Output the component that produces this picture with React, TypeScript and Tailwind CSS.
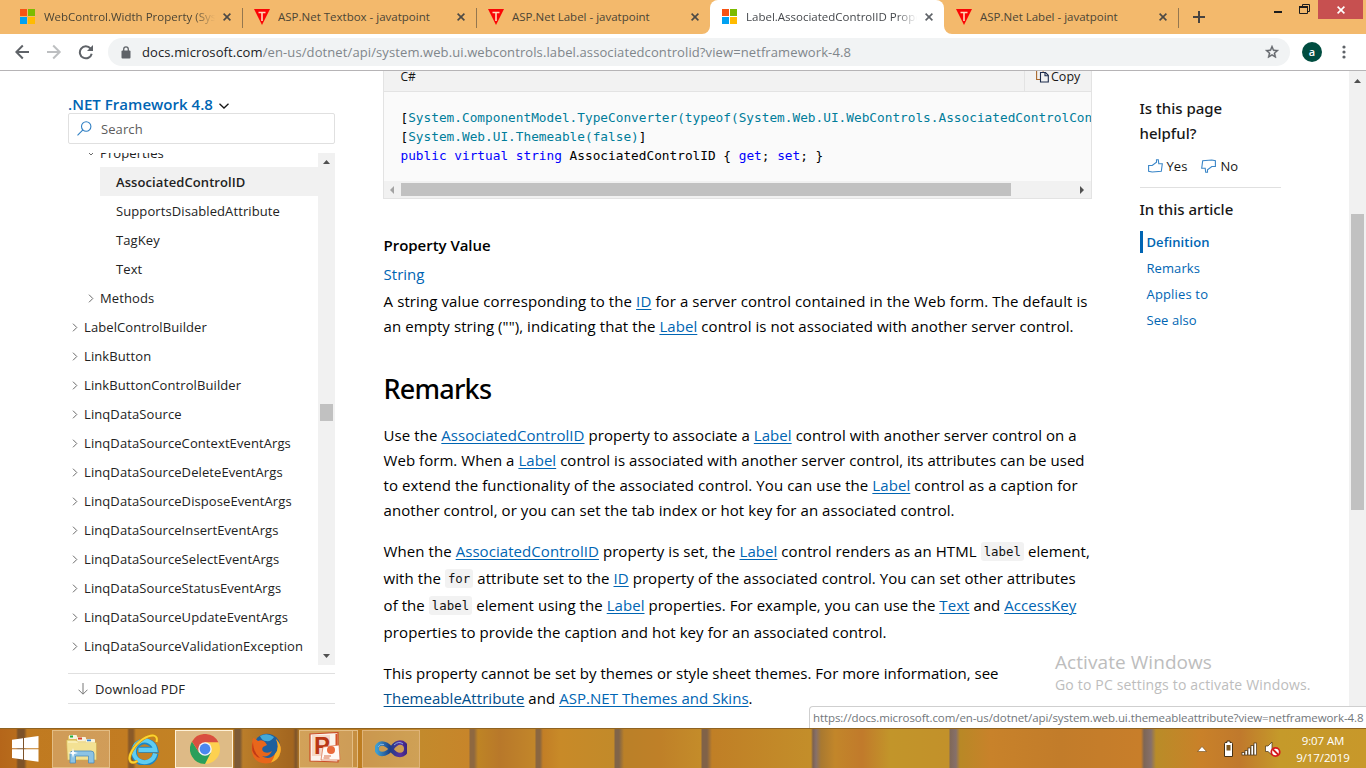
import type { ReactNode } from "react";

function MsLogo() {
  return (
    <svg width="16" height="16" viewBox="0 0 16 16" className="shrink-0" shapeRendering="crispEdges">
      <rect x="0" y="0" width="7" height="7" fill="#f65314" />
      <rect x="8" y="0" width="7" height="7" fill="#7cbb00" />
      <rect x="0" y="8" width="7" height="7" fill="#00a1f1" />
      <rect x="8" y="8" width="7" height="7" fill="#ffbb00" />
    </svg>
  );
}

function JtpLogo() {
  return (
    <svg width="16" height="16" viewBox="0 0 16 16" className="shrink-0">
      <path d="M0 0H16L8 16Z" fill="#fb0505" />
      <path d="M4.5 3.5h7M8 3.5v8.5" stroke="#ffd9b8" strokeWidth="1.6" fill="none" />
    </svg>
  );
}

function CloseX({ color = "#4d4a45" }: { color?: string }) {
  return (
    <svg width="8" height="8" viewBox="0 0 8 8" className="shrink-0">
      <path d="M0.6 0.6L7.4 7.4M7.4 0.6L0.6 7.4" stroke={color} strokeWidth="1.6" />
    </svg>
  );
}

function Tab({ icon, title, fade = "", sep = true }: { icon: ReactNode; title: string; fade?: string; sep?: boolean }) {
  return (
    <div className="flex h-[34px] w-[234px] shrink-0 items-center pl-[12px]">
      {icon}
      <span className={`ml-2 w-[171px] shrink-0 overflow-hidden whitespace-nowrap text-[11.5px] leading-4 text-[#4c4535] ${fade}`}>
        {title}
      </span>
      <span className="ml-2 flex"><CloseX /></span>
      {sep && <span className="ml-[11px] mt-0.5 h-5 w-px shrink-0 bg-[#94774f]" />}
    </div>
  );
}

function TabStrip() {
  return (
    <div className="relative flex h-[34px] shrink-0 bg-[#f3b96c] pl-2">
      <Tab
        icon={<MsLogo />}
        title="WebControl.Width Property (System"
        fade="[mask-image:linear-gradient(to_right,black_150px,transparent_171px)]"
      />
      <Tab icon={<JtpLogo />} title="ASP.Net Textbox - javatpoint" />
      <Tab icon={<JtpLogo />} title="ASP.Net Label - javatpoint" sep={false} />
      <div className="relative flex h-[34px] w-[234px] shrink-0 items-center rounded-t-lg bg-white pl-[12px]">
        <svg width="8" height="8" className="absolute -left-2 bottom-0"><path d="M8 0A8 8 0 0 1 0 8H8Z" fill="#fff" /></svg>
        <svg width="8" height="8" className="absolute -right-2 bottom-0"><path d="M0 0A8 8 0 0 0 8 8H0Z" fill="#fff" /></svg>
        <MsLogo />
        <span className="ml-2 w-[171px] shrink-0 overflow-hidden whitespace-nowrap text-[11.5px] leading-4 text-[#45484c] [mask-image:linear-gradient(to_right,black_150px,transparent_171px)]">
          Label.AssociatedControlID Property
        </span>
        <span className="ml-2 flex"><CloseX color="#5f6368" /></span>
      </div>
      <Tab icon={<JtpLogo />} title="ASP.Net Label - javatpoint" />
      <svg width="12" height="12" viewBox="0 0 12 12" className="ml-[15px] mt-[11px]">
        <path d="M6 0V12M0 6H12" stroke="#474340" strokeWidth="2" />
      </svg>
      <div className="ml-auto flex pr-[3px]">
        <svg width="44" height="20" viewBox="0 0 44 20">
          <rect x="0" y="11" width="8" height="2" fill="#1c1c1c" />
          <path d="M28.500 6V4.500H35.500V11.500H34" fill="none" stroke="#1c1c1c" />
          <path d="M25.500 6V13.500H33.500V6" fill="none" stroke="#1c1c1c" />
          <rect x="25" y="6" width="9" height="2" fill="#1c1c1c" />
        </svg>
        <div className="flex h-[19px] w-[45px] items-center justify-center bg-[#c75050]">
          <CloseX color="#ffffff" />
        </div>
      </div>
    </div>
  );
}

function Toolbar() {
  return (
    <div className="flex h-9 shrink-0 items-center bg-white pl-[15px] pr-[20px]">
      <svg width="78" height="16" viewBox="0 0 78 16" fill="none" strokeWidth="2">
        <path d="M14 8H1.500M7.800 1.500L1.300 8L7.800 14.500" stroke="#5f6368" />
        <path d="M32 8H44.500M38.200 1.500L44.700 8L38.200 14.500" stroke="#bdbfc1" />
        <path d="M75.500 4.500A6 6 0 1 0 76.700 9.700" stroke="#5f6368" />
        <path d="M78 1V7H72Z" fill="#5f6368" />
      </svg>
      <div className="ml-[15px] flex h-7 w-[1182px] items-center rounded-full bg-[#f1f3f4] pl-[13px] pr-[10px]">
        <svg width="10" height="13" viewBox="0 0 10 13">
          <rect x="0.500" y="4.500" width="9" height="8" rx="1" fill="#5f6368" />
          <path d="M2.700 5V3.200a2.300 2.300 0 0 1 4.600 0V5" fill="none" stroke="#5f6368" strokeWidth="1.300" />
        </svg>
        <span className="ml-[11px] whitespace-nowrap text-[13px] leading-5 tracking-[0.104px] text-[#80868b]">
          <span className="text-[#202124]">docs.microsoft.com</span>/en-us/dotnet/api/system.web.ui.webcontrols.label.associatedcontrolid?view=netframework-4.8
        </span>
        <svg width="16" height="16" viewBox="0 0 24 24" className="ml-auto">
          <path
            d="M22 9.240l-7.190-.620L12 2 9.190 8.630 2 9.240l5.460 4.730L5.820 21 12 17.270 18.180 21l-1.630-7.030L22 9.240zM12 15.400l-3.760 2.270 1-4.280-3.320-2.880 4.380-.380L12 6.100l1.710 4.040 4.380.380-3.320 2.880 1 4.280L12 15.400z"
            fill="#5f6368" stroke="#5f6368" strokeWidth="0.600"
          />
        </svg>
      </div>
      <div className="ml-3 flex size-5 items-center justify-center rounded-full bg-[#004d40] pb-px text-[11px] font-semibold leading-none text-white">a</div>
      <svg width="4" height="14" viewBox="0 0 4 14" className="ml-auto" fill="#5f6368">
        <circle cx="2" cy="2" r="1.600" /><circle cx="2" cy="7" r="1.600" /><circle cx="2" cy="12" r="1.600" />
      </svg>
    </div>
  );
}

function Chevron({ down = false }: { down?: boolean }) {
  return (
    <svg width="6" height="9" viewBox="0 0 6 9" className="mr-[6px] shrink-0" fill="none" stroke="#6a6a6a" strokeWidth="1">
      <path d={down ? "M0.500 3.500L3 6L5.500 3.500" : "M1 0.700L4.800 4.500L1 8.300"} />
    </svg>
  );
}

const leaves = ["SupportsDisabledAttribute", "TagKey", "Text"];
const classes = [
  "LabelControlBuilder",
  "LinkButton",
  "LinkButtonControlBuilder",
  "LinqDataSource",
  "LinqDataSourceContextEventArgs",
  "LinqDataSourceDeleteEventArgs",
  "LinqDataSourceDisposeEventArgs",
  "LinqDataSourceInsertEventArgs",
  "LinqDataSourceSelectEventArgs",
  "LinqDataSourceStatusEventArgs",
  "LinqDataSourceUpdateEventArgs",
  "LinqDataSourceValidationException",
];

function Sidebar() {
  return (
    <aside className="flex w-[267px] shrink-0 flex-col pt-[22px] text-[13px] tracking-[0.095px] text-[#222]">
      <div className="flex h-5 items-center pt-[2px] text-[15px] font-semibold leading-5 tracking-[0.036px] text-[#0065b3]">
        .NET Framework 4.8
        <svg width="10" height="6" viewBox="0 0 10 6" className="ml-[6px] mt-1"><path d="M0.500 0.700L5 5L9.500 0.700" fill="none" stroke="#171717" strokeWidth="1.300" /></svg>
      </div>
      <div className="flex h-[31px] items-center rounded-[2px] border border-[#e0e0e0] pl-2 text-[#5c5c5c]">
        <svg width="15" height="15" viewBox="0 0 15 15" fill="none" stroke="#2f7fc3" strokeWidth="1.100">
          <circle cx="9.200" cy="5.500" r="4.700" /><path d="M5.900 8.900L0.500 14.300" />
        </svg>
        <span className="ml-[9px] pt-[2px]">Search</span>
      </div>
      <div className="mt-[9px] flex h-[512px]">
        <div className="h-[511px] flex-1 overflow-hidden">
          <div className="-mt-[15px] flex h-[29px] items-center pl-[20px] pt-[2px]"><Chevron down />Properties</div>
          <div className="ml-8 flex h-[29px] items-center bg-[#f1f1f1] pl-4 pt-[2px] font-semibold tracking-[0.09px]">AssociatedControlID</div>
          {leaves.map((t) => (
            <div key={t} className="flex h-[29px] items-center pl-12 pt-[2px]">{t}</div>
          ))}
          <div className="flex h-[29px] items-center pl-[20px] pt-[2px]"><Chevron />Methods</div>
          {classes.map((t) => (
            <div key={t} className="flex h-[29px] items-center whitespace-nowrap pl-[4px] pt-[2px]"><Chevron />{t}</div>
          ))}
        </div>
        <div className="flex w-[17px] flex-col items-center bg-[#f1f1f1]">
          <svg width="7" height="4" className="mt-[7px]"><path d="M0 4L3.500 0L7 4Z" fill="#505050" /></svg>
          <div className="mt-[240px] h-[17px] w-[13px] bg-[#c1c1c1]" />
          <svg width="7" height="4" className="mt-[233px]"><path d="M0 0L3.500 4L7 0Z" fill="#505050" /></svg>
        </div>
      </div>
      <div className="mt-2 flex h-[31px] items-center border-y border-[#e0e0e0] pl-[10px]">
        <svg width="10" height="12" viewBox="0 0 10 12" fill="none" stroke="#777" strokeWidth="1"><path d="M5 0V11M0.500 6.700L5 11.200L9.500 6.700" /></svg>
        <span className="ml-[7px] pt-[2px]">Download PDF</span>
      </div>
    </aside>
  );
}

function A({ children }: { children: ReactNode }) {
  return <span className="text-[#0065b3] underline decoration-1 underline-offset-2">{children}</span>;
}

function Code({ children }: { children: ReactNode }) {
  return (
    <span className="flex h-[19px] items-center rounded-[3px] bg-[#f2f2f2] px-[3px] font-['DejaVu_Sans_Mono',monospace] text-[12.4px] tracking-normal text-[#111]">
      {children}
    </span>
  );
}

function K({ children }: { children: ReactNode }) {
  return <span className="text-[#0101fd]">{children}</span>;
}

function Article() {
  return (
    <main className="ml-[48px] flex w-[709px] shrink-0 flex-col whitespace-nowrap text-[15px] leading-[25px] text-black">
      <div className="flex h-[128px] flex-col border-x border-b border-[#e3e3e3] bg-[#fafafa]">
        <div className="flex h-[21px] items-start justify-between border-b border-[#e3e3e3] bg-[#f2f2f2] pl-[16.5px] text-[12px] leading-5 text-[#171717]">
          <span className="-mt-[4px]">C#</span>
          <div className="flex h-[20px] w-[67px] border-l border-[#e3e3e3] pl-[11px]">
            <svg width="13" height="15" viewBox="0 0 13 15" className="-mt-[3px]" fill="none" strokeWidth="1.100">
              <path d="M4 11.500H0.600V1.500H5.500L7.500 3.500" stroke="#a8682c" />
              <path d="M4.500 4.500H9.500L12.300 7.300V14H4.500Z" stroke="#1d2c4d" />
              <path d="M9 4.500V7.800H12.300" stroke="#1d2c4d" />
            </svg>
            <span className="-mt-[4px] ml-[2px] text-[12.5px]">Copy</span>
          </div>
        </div>
        <pre className="h-[89px] overflow-hidden pl-[16.5px] pt-[16px] font-['DejaVu_Sans_Mono',monospace] text-[12.78px] leading-[19px]">
          <div>[<span className="text-[#007d9a]">System.ComponentModel.TypeConverter(typeof(System.Web.UI.WebControls.AssociatedControlConverter))</span>]</div>
          <div>[<span className="text-[#007d9a]">System.Web.UI.Themeable(false)</span>]</div>
          <div><K>public</K> <K>virtual</K> <K>string</K> AssociatedControlID {"{"} <K>get</K>; <K>set</K>; {"}"}</div>
        </pre>
        <div className="flex h-[17px] items-center bg-[#f1f1f1] pl-[6px]">
          <svg width="4" height="8"><path d="M4 0L0 4L4 8Z" fill="#a3a3a3" /></svg>
          <div className="ml-[7px] h-[13px] w-[610px] bg-[#c1c1c1]" />
          <svg width="4" height="8" className="ml-[69px]"><path d="M0 0L4 4L0 8Z" fill="#505050" /></svg>
        </div>
      </div>

      <div className="flex flex-col pl-[0.6px]">
        <h4 className="mt-[34px] font-semibold tracking-[-0.041px]">Property Value</h4>
        <div className="mt-1 text-[#0065b3]">String</div>
        <div className="mt-[2px] tracking-[0.099px]">A string value corresponding to the <A>ID</A> for a server control contained in the Web form. The default is</div>
        <div className="tracking-[0.073px]">an empty string (""), indicating that the <A>Label</A> control is not associated with another server control.</div>

        <h2 className="mt-[32px] font-['Noto_Sans',sans-serif] text-[27px] font-medium leading-9 tracking-[-0.8px]">Remarks</h2>
        <div className="mt-4 tracking-[0.058px]">Use the <A>AssociatedControlID</A> property to associate a <A>Label</A> control with another server control on a</div>
        <div className="tracking-[0.043px]">Web form. When a <A>Label</A> control is associated with another server control, its attributes can be used</div>
        <div className="tracking-[0.082px]">to extend the functionality of the associated control. You can use the <A>Label</A> control as a caption for</div>
        <div className="tracking-[0.057px]">another control, or you can set the tab index or hot key for an associated control.</div>

        <div className="mt-[15px] flex h-[27px] items-center gap-1 leading-[27px] tracking-[0.065px]">
          <span>When the <A>AssociatedControlID</A> property is set, the <A>Label</A> control renders as an HTML</span>
          <Code>label</Code>
          <span>element,</span>
        </div>
        <div className="flex h-[27px] items-center gap-1 leading-[27px] tracking-[0.06px]">
          <span>with the</span>
          <Code>for</Code>
          <span>attribute set to the <A>ID</A> property of the associated control. You can set other attributes</span>
        </div>
        <div className="flex h-[27px] items-center gap-1 leading-[27px] tracking-[0.05px]">
          <span>of the</span>
          <Code>label</Code>
          <span>element using the <A>Label</A> properties. For example, you can use the <A>Text</A> and <A>AccessKey</A></span>
        </div>
        <div className="h-[27px] leading-[27px] tracking-[0.075px]">properties to provide the caption and hot key for an associated control.</div>

        <div className="mt-[15px] tracking-[0.022px]">This property cannot be set by themes or style sheet themes. For more information, see</div>
        <div className="tracking-[0.038px]"><span className="text-[#004e8c] underline decoration-1 underline-offset-2">ThemeableAttribute</span> and <A>ASP.NET Themes and Skins</A>.</div>
      </div>
    </main>
  );
}

function Thumb({ flip = false }: { flip?: boolean }) {
  return (
    <svg width="15" height="14" viewBox="0 0 15 14" fill="none" stroke="#3a86c8" strokeWidth="1.100" className={flip ? "rotate-180" : ""}>
      <path d="M0.600 6.500H4.200L8.500 3.200V0.800H10.300L10.800 4.800H14.300L13.300 12.300L4.200 13L0.600 12.300Z" />
    </svg>
  );
}

function Aside() {
  return (
    <aside className="ml-[47.5px] flex w-[141px] shrink-0 flex-col pt-[25px] text-[13px] tracking-[0.08px]">
      <h3 className="font-['Noto_Sans',sans-serif] text-[15px] font-medium leading-[25px] tracking-normal text-[#171717]">Is this page<br />helpful?</h3>
      <div className="mt-[10px] flex h-5 items-center pl-2 text-[#171717]">
        <Thumb /><span className="ml-1 w-[34px] pt-[2px]">Yes</span><Thumb flip /><span className="ml-[5px] pt-[2px]">No</span>
      </div>
      <div className="mt-[11px] h-px bg-[#e0e0e0]" />
      <h3 className="mt-[9px] font-['Noto_Sans',sans-serif] text-[15px] font-medium leading-[25px] tracking-normal text-[#171717]">In this article</h3>
      <nav className="mt-[9px] flex flex-col gap-1 text-[#0065b3]">
        <span className="border-l-[3px] border-[#0065b3] pl-1 font-semibold leading-[22px]">Definition</span>
        <span className="pl-[7px] leading-[22px]">Remarks</span>
        <span className="pl-[7px] leading-[22px] tracking-[0.16px]">Applies to</span>
        <span className="pl-[7px] leading-[22px]">See also</span>
      </nav>
    </aside>
  );
}

function ExplorerIcon() {
  return (
    <svg width="33" height="32" viewBox="0 0 33 32">
      <path d="M3 3h9l2 3h7l2 3h7v18H3z" fill="#e3c565" />
      <rect x="4" y="2" width="8" height="4" rx="1" fill="#f6f2e0" /><rect x="5" y="2.500" width="3" height="2" fill="#1fae3c" />
      <rect x="12" y="4" width="9" height="4" rx="1" fill="#f6f2e0" /><rect x="13" y="4.500" width="4" height="2" fill="#d8432b" />
      <rect x="21" y="6" width="9" height="4" rx="1" fill="#f6f2e0" /><rect x="22" y="6.500" width="4" height="2" fill="#3b86d6" />
      <path d="M1.500 7H11l2 2.500H31.500V27H2.500Z" fill="#f3e193" stroke="#cfac4c" strokeWidth="0.600" />
      <path d="M3 9H30" stroke="#fff8cd" />
      <path d="M5 30V21Q5 18 8 18H26Q29 18 29 21V30H23.500V23H10.500V30Z" fill="#8cc3e4" stroke="#4c8cba" strokeWidth="0.800" />
      <path d="M8 15L9 19L13 20L9 21L8 25L7 21L3 20L7 19Z" fill="#fff" />
    </svg>
  );
}

function IeIcon() {
  return (
    <svg width="32" height="32" viewBox="0 0 32 32" fill="none">
      <path d="M27.500 20.500A10.800 10.800 0 1 1 27.300 16.800H10.500" stroke="#1c86c4" strokeWidth="6" />
      <path d="M27.200 20.500A10.800 10.800 0 1 1 27.300 16.800H10.500" stroke="#5fcdf2" strokeWidth="4.200" />
      <path d="M28.500 9C30.500 1.500 24 0.500 15 6C6 12 -1 24 2.500 28.500C4 30 7 29.500 9.500 28" stroke="#c98a0c" strokeWidth="3" />
      <path d="M28.500 9C30.500 1.500 24 0.500 15 6C6 12 -1 24 2.500 28.500C4 30 7 29.500 9.500 28" stroke="#fbd332" strokeWidth="2" />
    </svg>
  );
}

function ChromeIcon() {
  return (
    <svg width="30" height="30" viewBox="0 0 30 30">
      <circle cx="15" cy="15" r="15" fill="#fdd150" />
      <path d="M9.100 18.400L2 7.500A15 15 0 0 0 15 30L20.900 18.400Z" fill="#2a9f5b" />
      <path d="M2 7.500A15 15 0 0 1 28.400 8.200H15L9.100 18.400Z" fill="#d94f40" />
      <circle cx="15" cy="15" r="6.800" fill="#f4f4f4" />
      <circle cx="15" cy="15" r="5.400" fill="#4a87ee" />
    </svg>
  );
}

function FirefoxIcon() {
  return (
    <svg width="30" height="31" viewBox="0 0 30 31">
      <circle cx="16" cy="14" r="13.300" fill="#1f5f9e" />
      <path d="M9 3Q16 -1 23 4Q20 9 15 8Q11 8 9 3Z" fill="#43a9d8" />
      <path d="M2 5Q5 6 7 8Q11 6 14 9L16 12L12 14Q10 17 13 19Q17 21 21 18Q18 25 11 23Q18 28 24 21Q29 15 25 6Q31 12 29.500 19Q27 30 15 30.500Q3 30 0.800 19Q0 12 2 5Z" fill="#e8661b" />
      <path d="M24 21Q29 15 25 6Q31 12 29.500 19Q28 27 20 29.500Q23 25 24 21Z" fill="#f5b32c" />
      <path d="M2 9Q2 19 9 25Q4 24 1.500 18Q0.800 13 2 9Z" fill="#c23a16" />
    </svg>
  );
}

function PowerPointIcon() {
  return (
    <svg width="32" height="31" viewBox="0 0 32 31">
      <path d="M1 2L29 0.500V30L1 29Z" fill="#fbf3ec" stroke="#cb4c27" strokeWidth="1.200" />
      <path d="M26.500 2V15H28.500V2Z" fill="#d45127" />
      <rect x="3" y="3" width="18" height="21" fill="#f6d8c6" />
      <text x="5" y="22" fontFamily="Liberation Sans, sans-serif" fontWeight="700" fontSize="24" fill="#b93614">P</text>
      <path d="M14 15L30 13L31 28L12 28Z" fill="#fffaf5" stroke="#d96c43" strokeWidth="0.700" />
      <circle cx="22" cy="18" r="4" fill="#ea6a3a" />
      <path d="M15 24h7M14.500 26h6" stroke="#d96c43" />
    </svg>
  );
}

function VsIcon() {
  return (
    <svg width="32" height="18" viewBox="0 0 32 18" fill="none">
      <defs>
        <linearGradient id="vs" x1="0" x2="1">
          <stop offset="0" stopColor="#3e9fd0" /><stop offset="0.450" stopColor="#1d3f86" /><stop offset="0.800" stopColor="#5a2f9e" /><stop offset="1" stopColor="#3a2683" />
        </linearGradient>
      </defs>
      <path d="M16 9C12 4 9 3.500 7 3.500A5 5 0 0 0 7 14C11 14 14 12 17 8C20 4 22 2.500 25 2.500A6 6 0 0 1 25 15C21 15 18 12 16 9Z" stroke="url(#vs)" strokeWidth="4.500" />
      <path d="M3 7Q5 3 9 4.500M19 5Q24 0.500 28 4" stroke="#8fb6e6" strokeWidth="0.900" />
    </svg>
  );
}

function Taskbar() {
  return (
    <footer className="flex h-10 shrink-0 items-center border-t border-[#8f6322] bg-[linear-gradient(to_right,#b5661a_0px,#b86c1c_16px,#7d5228_18px,#7d5228_24px,#c07a20_27px,#c27c22_127px,#8a5a28_129px,#8a5a28_133px,#c28024_136px,#c48424_233px,#7d5a35_235px,#7d5a35_240px,#ba7d2a_243px,#a2651f_293px,#7c532b_296px,#c38322_300px,#bd7c20_355px,#c38a2c_420px,#c7852a_469px,#8e6840_470px,#8e6840_474px,#be8425_478px,#b8782a_500px,#c2862a_535px,#8a6640_536px,#8a6640_540px,#c27e26_543px,#c88a28_560px,#c28a2a_614px,#806448_615px,#806448_619px,#ba8028_624px,#bf8028_660px,#c48c2a_701px,#806248_702px,#806248_707px,#c07f26_712px,#c38e2a_811px,#7d6250_813px,#86706a_816px,#a97930_821px,#c2862a_835px,#c17a2b_862px,#c2952a_890px,#c2912a_949px,#806858_950px,#86706a_956px,#b88826_960px,#c8822a_990px,#c27c2a_1060px,#c87e2a_1141px,#7d6656_1144px,#86706a_1151px,#b98c28_1156px,#c98129_1200px,#c0792c_1240px,#c59a2a_1280px,#c8982a_1366px)] text-white">
      <svg width="27" height="26" viewBox="0 0 27 26" className="ml-[12px]" fill="#fff">
        <path d="M0 3.800L11 2.200V12.200H0ZM12 2L26.500 0V12.200H12ZM0 13.200H11V23.600L0 22ZM12 13.200H26.500V25.800L12 23.800Z" />
      </svg>
      <div className="ml-[13px] flex h-[38px] w-[58px] items-center justify-center border border-[#e3bd84] bg-white/25"><ExplorerIcon /></div>
      <div className="ml-[18px]"><IeIcon /></div>
      <div className="ml-[15px] flex h-[38px] w-[58px] items-center justify-center border border-[#fff1d8] bg-white/45 pl-px"><ChromeIcon /></div>
      <div className="ml-[18px]"><FirefoxIcon /></div>
      <div className="ml-[18px] flex h-[38px] w-[54px] items-center border border-[#e3bd84] bg-white/25 pl-[9px] pb-[3px]"><PowerPointIcon /></div>
      <div className="h-[38px] w-[5px] border-y border-r border-[#e3bd84] bg-white/15" />
      <div className="ml-[4px] flex h-[38px] w-[58px] items-center justify-center border border-[#dfb378] bg-white/20"><VsIcon /></div>
      <div className="ml-auto flex items-center pr-[15px]">
        <svg width="10" height="6"><path d="M0.500 5.500L5 0.500L9.500 5.500Z" fill="#fff" stroke="#6b4a1d" strokeWidth="0.600" /></svg>
        <svg width="58" height="18" viewBox="0 0 58 18" className="ml-[16px]">
          <path d="M3 2.500H4V1H7V2.500H8.500Q9.500 2.500 9.500 3.500V16.500H1.500V3.500Q1.500 2.500 3 2.500Z" fill="#fff" stroke="#453015" />
          <rect x="3.500" y="5" width="4" height="5.500" fill="#80591f" />
          <g fill="#fff" stroke="#453015" strokeWidth="0.700">
            <rect x="19" y="12.500" width="2.500" height="2.500" /><rect x="22" y="10.500" width="2.500" height="4.500" /><rect x="25" y="8" width="2.500" height="7" /><rect x="28" y="5.500" width="2.500" height="9.500" /><rect x="31" y="3" width="2.500" height="12" />
          </g>
          <path d="M42.500 6H45L49 2V15L45 11.500H42.500Z" fill="#fff" stroke="#453015" strokeWidth="0.700" />
          <circle cx="52.500" cy="12" r="4.200" fill="#fff" stroke="#d61a1a" strokeWidth="1.800" />
          <path d="M49.500 9L55.500 15" stroke="#d61a1a" strokeWidth="1.800" />
        </svg>
        <div className="ml-[14px] flex w-[56px] flex-col items-center text-[11.500px] leading-[17px]">
          <span className="tracking-[-0.1px]">9:07 AM</span>
          <span className="tracking-[-0.1px]">9/17/2019</span>
        </div>
      </div>
    </footer>
  );
}

export default function App() {
  return (
    <div className="relative flex h-[768px] w-[1366px] flex-col overflow-hidden bg-white font-['Open_Sans',sans-serif]">
      <TabStrip />
      <Toolbar />
      <div className="flex h-[658px] overflow-hidden border-t border-[#b6b4b6] pl-[68px]">
        <Sidebar />
        <Article />
        <Aside />
        <div className="ml-auto flex w-[17px] flex-col items-center bg-[#f1f1f1]">
          <svg width="7" height="4" className="mt-[8px]"><path d="M0 4L3.500 0L7 4Z" fill="#505050" /></svg>
          <div className="mt-[131px] h-[296px] w-[13px] bg-[#c1c1c1]" />
        </div>
      </div>
      <Taskbar />
      <div className="absolute left-[1055px] top-[649px] flex flex-col whitespace-nowrap text-[#bdbdbd]">
        <span className="text-[19px] leading-[27px] tracking-[0.066px]">Activate Windows</span>
        <span className="text-[14px] leading-[18px] tracking-[0.17px]">Go to PC settings to activate Windows.</span>
      </div>
      <div className="absolute left-[809px] top-[706px] flex h-[22px] w-[557px] items-center whitespace-nowrap rounded-tl-[4px] border-l border-t border-[#cfcfcf] bg-white pl-[3px] text-[11.5px] tracking-[-0.08px] text-[#72767a]">
        https://docs.microsoft.com/en-us/dotnet/api/system.web.ui.themeableattribute?view=netframework-4.8
      </div>
    </div>
  );
}
